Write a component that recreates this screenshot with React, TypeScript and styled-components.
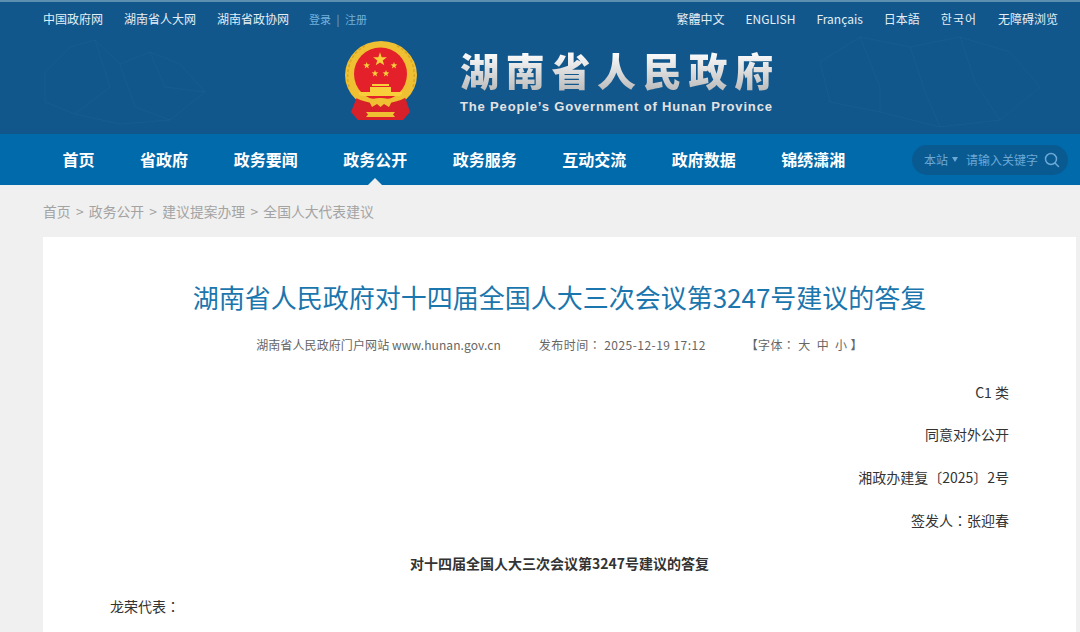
import React from "react";
import styled, { createGlobalStyle } from "styled-components";

const CJK = `"Noto Sans CJK SC", "Liberation Sans", sans-serif`;

const Global = createGlobalStyle`
  html, body { margin: 0; padding: 0; background: #f0f0f0; }
  body { font-family: ${CJK}; height: 632px; overflow: hidden; }
  a { color: inherit; text-decoration: none; }
`;

const Page = styled.div`
  width: 1080px;
  height: 632px;
  overflow: hidden;
  background: #f0f0f0;
`;

const Header = styled.header`
  position: relative;
  height: 134px;
  box-sizing: border-box;
  border-top: 2px solid #5d90b0;
  background: #11578c;
  display: flex;
  flex-direction: column;
`;

const MapLines = styled.svg`
  position: absolute;
  inset: 0;
  width: 100%;
  height: 100%;
  pointer-events: none;
`;

const TopBar = styled.div`
  position: relative;
  height: 34px;
  padding: 0 22px 0 43px;
  display: flex;
  align-items: center;
  justify-content: space-between;
  font-size: 12px;
  line-height: 34px;
  color: #e4eef5;
`;

const LinkGroup = styled.div`
  display: flex;
  align-items: center;
  gap: 21px;
`;

const LangLink = styled.a<{ $spaced?: boolean }>`
  letter-spacing: ${(p) => (p.$spaced ? "1px" : "0")};
`;

const AuthLinks = styled.div`
  display: flex;
  gap: 5.5px;
  font-size: 11px;
  color: #72b1dd;
  margin-left: -1px;
`;

const Brand = styled.div`
  position: relative;
  display: flex;
  align-items: flex-start;
  padding: 5px 0 0 345px;
  gap: 43px;
`;

const BrandText = styled.div`
  display: flex;
  flex-direction: column;
`;

const BrandTitle = styled.div`
  font-size: 39px;
  font-weight: 900;
  line-height: 46px;
  letter-spacing: 6.7px;
  width: 320px;
  white-space: nowrap;
  margin-top: 5px;
  background: linear-gradient(180deg, #f8f8f8 20%, #b9b9b9 100%);
  -webkit-background-clip: text;
  background-clip: text;
  color: transparent;
`;

const BrandSub = styled.div`
  font-family: "Liberation Sans", sans-serif;
  font-weight: 700;
  font-size: 13px;
  letter-spacing: 0.84px;
  line-height: 16px;
  margin-top: 7px;
  white-space: nowrap;
  color: #e3e3e3;
`;

const Nav = styled.nav`
  height: 51px;
  background: #016aab;
  display: flex;
  align-items: center;
  justify-content: space-between;
  padding: 0 12px 0 62.6px;
`;

const NavList = styled.div`
  display: flex;
  gap: 45.5px;
`;

const NavItem = styled.a<{ $active?: boolean }>`
  position: relative;
  font-size: 16px;
  font-weight: 700;
  line-height: 51px;
  height: 51px;
  color: #fff;
  white-space: nowrap;
  ${(p) =>
    p.$active
      ? `&::after {
          content: "";
          position: absolute;
          left: 50%;
          bottom: 0;
          margin-left: -7px;
          border-left: 7px solid transparent;
          border-right: 7px solid transparent;
          border-bottom: 7px solid #f0f0f0;
        }`
      : ""}
`;

const Search = styled.div`
  width: 156px;
  height: 30px;
  box-sizing: border-box;
  border-radius: 15px;
  background: #0a5a92;
  display: flex;
  align-items: center;
  padding: 0 8px 0 12px;
  font-size: 12px;
  color: #6aa9d6;
  white-space: nowrap;
`;

const Scope = styled.span`
  display: flex;
  align-items: center;
  gap: 4px;
  margin-right: 8px;
`;

const Caret = styled.i`
  width: 0;
  height: 0;
  border-left: 3px solid transparent;
  border-right: 3px solid transparent;
  border-top: 5px solid #6aa9d6;
`;

const Keyword = styled.span`
  flex: 1;
`;

const Crumbs = styled.div`
  height: 52px;
  padding-left: 43px;
  display: flex;
  align-items: center;
  gap: 5.3px;
  font-size: 13.8px;
  color: #a3a3a3;
`;

const Card = styled.main`
  margin-left: 43px;
  width: 1033px;
  height: 400px;
  box-sizing: border-box;
  background: #fff;
  padding: 0 67px;
`;

const Title = styled.h1`
  margin: 0;
  padding-top: 40px;
  text-align: center;
  font-size: 26px;
  font-weight: 400;
  line-height: 40px;
  color: #1b76ad;
  white-space: nowrap;
`;

const Meta = styled.div`
  margin-top: 18px;
  display: flex;
  justify-content: center;
  font-size: 12px;
  line-height: 20px;
  color: #666;
  white-space: nowrap;
`;

const MetaItem = styled.span<{ $gap?: number; $track?: number }>`
  margin-left: ${(p) => p.$gap ?? 0}px;
  letter-spacing: ${(p) => p.$track ?? 0}px;
`;

const Punct = styled.span`
  font-family: "Noto Sans CJK TC", sans-serif;
`;

const Body = styled.div`
  margin-top: 15.6px;
`;

const Para = styled.p<{ $align?: string; $bold?: boolean }>`
  margin: 0;
  height: 42.8px;
  line-height: 42.8px;
  font-size: 14px;
  color: #333;
  text-align: ${(p) => p.$align ?? "left"};
  font-weight: ${(p) => (p.$bold ? 700 : 400)};
`;

const starPoints = (cx: number, cy: number, r: number) =>
  Array.from({ length: 10 }, (_, i) => {
    const a = -Math.PI / 2 + (i * Math.PI) / 5;
    const rad = i % 2 === 0 ? r : r * 0.4;
    return `${(cx + rad * Math.cos(a)).toFixed(2)},${(cy + rad * Math.sin(a)).toFixed(2)}`;
  }).join(" ");

const Emblem = () => (
  <svg width="72" height="80" viewBox="0 0 72 80" style={{ flex: "none" }}>
    <ellipse cx="36" cy="34" rx="36" ry="34" fill="#efc032" />
    <path d="M4 46 C0 30 5 12 20 5" stroke="#dba623" strokeWidth="1.5" fill="none" strokeDasharray="3 2" />
    <path d="M68 46 C72 30 67 12 52 5" stroke="#dba623" strokeWidth="1.5" fill="none" strokeDasharray="3 2" />
    <circle cx="35.5" cy="33" r="26.5" fill="#e4202a" />
    <g fill="#f8cf3a">
      <polygon points={starPoints(35, 18.5, 7.2)} />
      <polygon points={starPoints(21.7, 24.5, 3.6)} />
      <polygon points={starPoints(49, 24.5, 3.6)} />
      <polygon points={starPoints(30, 32.5, 3.6)} />
      <polygon points={starPoints(41, 32.5, 3.6)} />
      <rect x="27" y="43" width="17" height="2" />
      <rect x="25" y="46" width="21" height="5" />
      <rect x="14" y="51" width="43" height="4" />
    </g>
    <path d="M12 56 Q24 62 35.5 59 Q47 62 60 56 L65 71 L58 79 L13 79 L6 71 Z" fill="#d8202a" />
    <path d="M11 52 Q24 60 35.5 57 Q47 60 60 52 L62 56 Q47 64 35.5 61 Q24 64 9 56 Z" fill="#efc032" />
    <path d="M24 60 Q35.5 54 47 60 L44 66 L39 63 L35.5 66 L32 63 L27 66 Z" fill="#efc032" />
    <path d="M21 71 L50 71 L48 73.5 L50 76 L21 76 L23 73.5 Z" fill="#efc032" />
  </svg>
);

const navItems = ["首页", "省政府", "政务要闻", "政务公开", "政务服务", "互动交流", "政府数据", "锦绣潇湘"];
const leftLinks = ["中国政府网", "湖南省人大网", "湖南省政协网"];
const rightLinks = ["繁體中文", "ENGLISH", "Français", "日本語", "한국어", "无障碍浏览"];

export default function App() {
  return (
    <Page>
      <Global />
      <Header>
        <MapLines viewBox="0 0 1080 132" fill="none" stroke="#2a6c9d" strokeOpacity="0.22">
          <path d="M45 70 L70 45 L95 38 L120 62 L150 50 L180 62 L205 90 L170 118 L120 122 L75 112 L45 100 Z" />
          <path d="M95 38 L110 85 L75 112 M120 62 L135 105 L170 118 M150 50 L165 85 L205 90" />
          <path d="M820 60 L860 35 L910 45 L960 35 L1010 50 L1040 85 L1000 118 L940 125 L880 110 L830 100 Z" />
          <path d="M860 35 L880 85 L880 110 M910 45 L925 90 L940 125 M960 35 L975 80 L1000 118" />
        </MapLines>
        <TopBar>
          <LinkGroup>
            {leftLinks.map((l) => (
              <a key={l}>{l}</a>
            ))}
            <AuthLinks>
              <a>登录</a>
              <span>|</span>
              <a>注册</a>
            </AuthLinks>
          </LinkGroup>
          <LinkGroup>
            {rightLinks.map((l) => (
              <LangLink key={l} $spaced={l === "한국어"}>
                {l}
              </LangLink>
            ))}
          </LinkGroup>
        </TopBar>
        <Brand>
          <Emblem />
          <BrandText>
            <BrandTitle>湖南省人民政府</BrandTitle>
            <BrandSub>The People’s Government of Hunan Province</BrandSub>
          </BrandText>
        </Brand>
      </Header>
      <Nav>
        <NavList>
          {navItems.map((n) => (
            <NavItem key={n} $active={n === "政务公开"}>
              {n}
            </NavItem>
          ))}
        </NavList>
        <Search>
          <Scope>
            本站 <Caret />
          </Scope>
          <Keyword>请输入关键字</Keyword>
          <svg width="16" height="16" viewBox="0 0 16 16" fill="none" stroke="#6aa9d6" strokeWidth="1.5">
            <circle cx="7" cy="7" r="5.5" />
            <path d="M11 11 L14.5 14.5" strokeLinecap="round" />
          </svg>
        </Search>
      </Nav>
      <Crumbs>
        <span>首页</span>
        <span>&gt;</span>
        <span>政务公开</span>
        <span>&gt;</span>
        <span>建议提案办理</span>
        <span>&gt;</span>
        <span>全国人大代表建议</span>
      </Crumbs>
      <Card>
        <Title>湖南省人民政府对十四届全国人大三次会议第3247号建议的答复</Title>
        <Meta>
          <MetaItem $track={0.1}>湖南省人民政府门户网站 www.hunan.gov.cn</MetaItem>
          <MetaItem $gap={38} $track={0.45}>
            发布时间<Punct>：</Punct> 2025-12-19 17:12
          </MetaItem>
          <MetaItem $gap={40} $track={0.35}>
            【字体<Punct>：</Punct> 大&nbsp;&nbsp;中&nbsp;&nbsp;小 】
          </MetaItem>
        </Meta>
        <Body>
          <Para $align="right">C1 类</Para>
          <Para $align="right">同意对外公开</Para>
          <Para $align="right">湘政办建复〔2025〕2号</Para>
          <Para $align="right">
            签发人<Punct>：</Punct>张迎春
          </Para>
          <Para $align="center" $bold>
            对十四届全国人大三次会议第3247号建议的答复
          </Para>
          <Para>
            龙荣代表<Punct>：</Punct>
          </Para>
        </Body>
      </Card>
    </Page>
  );
}
